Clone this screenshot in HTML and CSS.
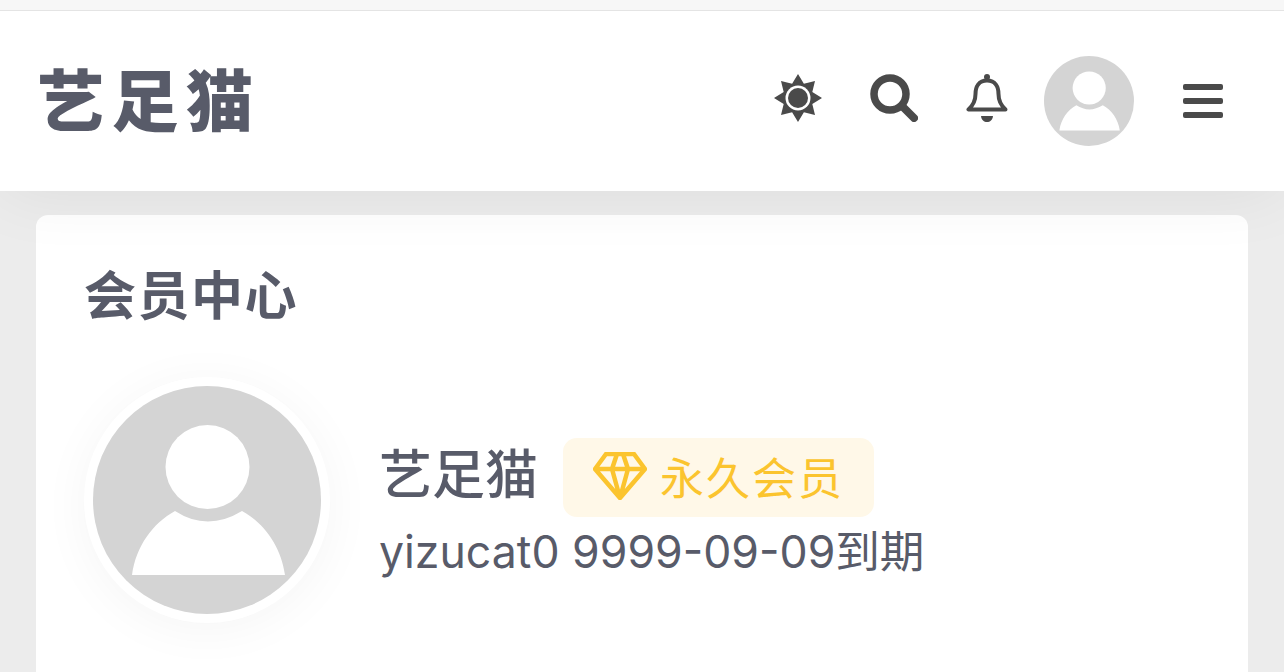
FILE: index.html
```html
<!DOCTYPE html>
<html lang="zh-CN">
<head>
<meta charset="utf-8">
<title>会员中心</title>
<link rel="stylesheet" href="styles.css">
</head>
<body>
<div class="strip"></div>
<header class="header">
  <div class="logo">艺足猫</div>
  <div class="tools">
    <svg class="ic-sun" viewBox="0 0 48 48"><polygon class="dark" points="24,0 29.9,9.7 41,7 38.3,18.1 48,24 38.3,29.9 41,41 29.9,38.3 24,48 18.1,38.3 7,41 9.7,29.9 0,24 9.7,18.1 7,7 18.1,9.7"/><circle class="white" cx="24" cy="24" r="12.5"/><circle class="dark" cx="24" cy="24" r="10"/></svg>
    <svg class="ic-search" viewBox="0 0 48 48"><circle class="line" cx="20" cy="20" r="16" stroke-width="7.5"/><path class="line" d="M33 33L44 44" stroke-width="8" stroke-linecap="round"/></svg>
    <svg class="ic-bell" viewBox="0 0 42 48"><circle class="dark" cx="21" cy="3" r="3"/><path class="line" d="M21 6.500C12.500 6.500 9.500 13 9.500 20C9.500 27 7.500 31 2.500 35.500H39.500C34.500 31 32.500 27 32.500 20C32.500 13 29.500 6.500 21 6.500Z" stroke-width="4" stroke-linejoin="round"/><path class="dark" d="M15 42H27C26.500 46 24 48 21 48C18 48 15.500 46 15 42Z"/></svg>
    <svg class="avatar-sm" viewBox="0 0 228 228"><circle class="grey" cx="114" cy="114" r="114"/><circle class="white" cx="114.500" cy="81" r="42"/><path class="white" d="M39 189C43 160 60 137 82 125Q114.500 146 149 125C171 137 188 160 192 189Z"/></svg>
    <div class="burger"><span></span><span></span><span></span></div>
  </div>
</header>
<main class="main">
  <section class="card">
    <h1 class="title">会员中心</h1>
    <div class="member">
      <div class="ring">
        <svg class="avatar-lg" viewBox="0 0 228 228"><circle class="grey" cx="114" cy="114" r="114"/><g class="soft"><circle class="white" cx="114.500" cy="81" r="42"/><path class="white" d="M39 189C43 160 60 137 82 125Q114.500 146 149 125C171 137 188 160 192 189Z"/></g></svg>
      </div>
      <div class="info">
        <div class="name-row">
          <span class="name">艺足猫</span>
          <span class="badge">
            <svg class="ic-gem" viewBox="0 0 54 48"><path class="gem" d="M13 2H41L52 17L27 46L2 17ZM2 17H52M19 17L27 46L35 17M19 17L24 2M35 17L30 2"/></svg>
            <span>永久会员</span>
          </span>
        </div>
        <div class="sub">yizucat0 9999-09-09到期</div>
      </div>
    </div>
  </section>
</main>
</body>
</html>
```
FILE: styles.css
```css
* { box-sizing: border-box; }
html, body { margin: 0; height: 672px; overflow: hidden; }
body {
  background: #ececec;
  font-family: Inter, "Noto Sans CJK SC", sans-serif;
  color: #585b69;
}
.strip { position: relative; z-index: 2; height: 11px; background: #f7f7f7; border-bottom: 1px solid #e4e4e4; }
.header {
  position: relative;
  z-index: 1;
  height: 180px;
  background: #fff;
  display: flex;
  align-items: center;
  justify-content: space-between;
  padding: 0 61px 0 37px;
  box-shadow: 0 0 70px rgba(0, 0, 0, 0.07);
}
.logo {
  font-size: 67px;
  font-weight: 900;
  letter-spacing: 7.500px;
  line-height: 1;
}
.tools { display: flex; align-items: center; }
.dark { fill: #4a4a4a; }
.white { fill: #fff; }
.grey { fill: #d4d4d4; }
.soft { filter: blur(0.6px); }
.line { fill: none; stroke: #4a4a4a; }
.gem { fill: none; stroke: #fbc42e; stroke-width: 4.500; stroke-linejoin: round; }
.ic-sun { width: 48px; height: 48px; margin-top: -6px; margin-right: 48px; }
.ic-search { width: 48px; height: 48px; margin-top: -6px; margin-right: 48px; }
.ic-bell { width: 42px; height: 48px; margin-top: -6px; margin-right: 36px; }
.avatar-sm { width: 90px; height: 90px; margin-right: 49px; display: block; }
.burger { width: 40px; display: flex; flex-direction: column; gap: 7.5px; }
.burger span { display: block; height: 6.5px; background: #4a4a4a; border-radius: 2px; }
.main { padding: 24px 36px 0; }
.card {
  background: #fff;
  border-radius: 12px;
  height: 480px;
  padding: 46px 48px;
}
.title {
  margin: 0;
  font-size: 52px;
  font-weight: 700;
  line-height: 72px;
  letter-spacing: 1.500px;
}
.member { display: flex; align-items: center; margin-top: 44px; }
.ring {
  width: 246px;
  height: 246px;
  border-radius: 50%;
  background: #fff;
  padding: 9px;
  box-shadow: 0 6px 50px rgba(0, 0, 0, 0.045);
  flex: none;
}
.avatar-lg { width: 228px; height: 228px; display: block; }
.info { margin-left: 49px; padding-top: 20px; display: flex; flex-direction: column; }
.name-row { display: flex; align-items: center; }
.name { font-size: 53px; font-weight: 500; line-height: 75px; padding-bottom: 4px; }
.badge {
  display: flex;
  align-items: center;
  margin-left: 25px;
  width: 311px;
  height: 79px;
  padding: 0 0 4px 30px;
  background: #fff8e8;
  border-radius: 14px;
  color: #fbc42e;
  font-size: 44px;
  letter-spacing: 2px;
}
.ic-gem { width: 54px; height: 48px; margin-right: 13px; flex: none; }
.sub { font-size: 44.600px; line-height: 60px; margin-top: 5px; white-space: nowrap; }
```
